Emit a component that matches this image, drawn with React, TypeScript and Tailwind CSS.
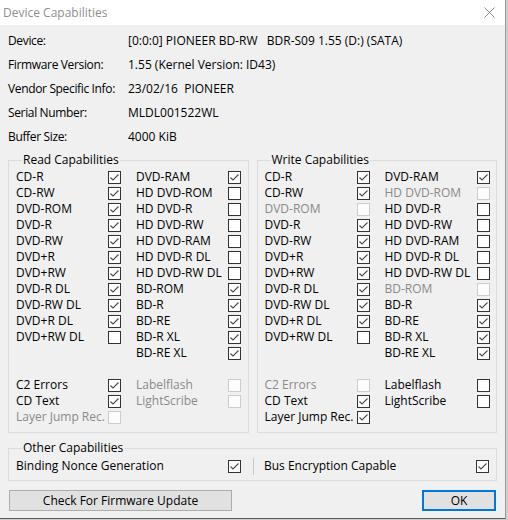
import React from "react";

type Item = { label: string; checked?: boolean; disabled?: boolean } | null;

const FONT = { fontFamily: '"Open Sans", "Noto Sans", sans-serif' };

function Check({ checked, disabled }: { checked?: boolean; disabled?: boolean }) {
  return (
    <span
      className={
        "flex h-[13px] w-[13px] shrink-0 items-center justify-center border " +
        (disabled ? "border-[#cccccc] bg-[#fcfcfc]" : "border-[#333333] bg-white")
      }
    >
      {checked && (
        <svg width="11" height="11" viewBox="0 0 11 11">
          <path d="M1.5 5.5 L4 8 L9.5 2.5" fill="none" stroke="#4a4a4a" strokeWidth="1.1" />
        </svg>
      )}
    </span>
  );
}

function Row({ item }: { item: Item }) {
  if (!item) return <div className="h-[16px]" />;
  return (
    <div className="flex h-[16px] items-center">
      <span
        className={
          "w-[92px] shrink-0 whitespace-nowrap text-[12px] leading-[16px] " +
          (item.disabled ? "text-[#8a8a8a]" : "text-black")
        }
      >
        {item.label}
      </span>
      <Check checked={item.checked} disabled={item.disabled} />
    </div>
  );
}

function Column({ items, wide }: { items: Item[]; wide?: boolean }) {
  return (
    <div className={"flex flex-col " + (wide ? "w-[120px]" : "w-[110px]")}>
      {items.map((it, i) => (
        <Row key={i} item={it} />
      ))}
    </div>
  );
}

function Group({ title, left, right }: { title: string; left: Item[]; right: Item[] }) {
  return (
    <fieldset className="w-[241px] min-w-0 border border-[#dcdcdc] pl-[7px] pt-[1px] pb-[7px]">
      <legend className="ml-[6px] px-[1px] text-[12px] leading-[16px] text-black">{title}</legend>
      <div className="flex">
        <Column items={left} wide />
        <Column items={right} />
      </div>
    </fieldset>
  );
}

const c = (label: string): Item => ({ label, checked: true });
const u = (label: string): Item => ({ label });
const d = (label: string): Item => ({ label, disabled: true });

const readLeft: Item[] = [
  c("CD-R"), c("CD-RW"), c("DVD-ROM"), c("DVD-R"), c("DVD-RW"), c("DVD+R"), c("DVD+RW"),
  c("DVD-R DL"), c("DVD-RW DL"), c("DVD+R DL"), u("DVD+RW DL"), null, null,
  c("C2 Errors"), c("CD Text"), d("Layer Jump Rec."),
];
const readRight: Item[] = [
  c("DVD-RAM"), u("HD DVD-ROM"), u("HD DVD-R"), u("HD DVD-RW"), u("HD DVD-RAM"), u("HD DVD-R DL"),
  u("HD DVD-RW DL"), c("BD-ROM"), c("BD-R"), c("BD-RE"), c("BD-R XL"), c("BD-RE XL"), null,
  d("Labelflash"), d("LightScribe"), null,
];
const writeLeft: Item[] = [
  c("CD-R"), c("CD-RW"), d("DVD-ROM"), c("DVD-R"), c("DVD-RW"), c("DVD+R"), c("DVD+RW"),
  c("DVD-R DL"), c("DVD-RW DL"), c("DVD+R DL"), u("DVD+RW DL"), null, null,
  d("C2 Errors"), c("CD Text"), c("Layer Jump Rec."),
];
const writeRight: Item[] = [
  c("DVD-RAM"), d("HD DVD-ROM"), u("HD DVD-R"), u("HD DVD-RW"), u("HD DVD-RAM"), u("HD DVD-R DL"),
  u("HD DVD-RW DL"), d("BD-ROM"), c("BD-R"), c("BD-RE"), c("BD-R XL"), c("BD-RE XL"), null,
  u("Labelflash"), u("LightScribe"), null,
];

const info: [string, string][] = [
  ["Device:", "[0:0:0] PIONEER BD-RW   BDR-S09 1.55 (D:) (SATA)"],
  ["Firmware Version:", "1.55 (Kernel Version: ID43)"],
  ["Vendor Specific Info:", "23/02/16  PIONEER"],
  ["Serial Number:", "MLDL001522WL"],
  ["Buffer Size:", "4000 KiB"],
];

export default function App() {
  return (
    <div className="h-[520px] w-[508px] overflow-hidden bg-[#cfcfcf]" style={FONT}>
      <div className="flex h-[519px] w-[506px] flex-col border-r border-b border-r-[#9a9a9a] border-b-[#5a5a5a] bg-[#f0f0f0]">
        {/* title bar */}
        <div className="flex h-[25px] shrink-0 items-center justify-between bg-white pl-[3px] pr-[10px]">
          <span className="text-[12px] text-[#8f8f8f]">Device Capabilities</span>
          <svg width="11" height="11" viewBox="0 0 11 11">
            <path d="M0.5 0.5 L10.5 10.5 M10.5 0.5 L0.5 10.5" stroke="#8a8a8a" strokeWidth="1" />
          </svg>
        </div>

        <div className="flex flex-col px-[8px] pt-[4px]">
          {info.map(([k, v]) => (
            <div key={k} className="flex h-[24px] items-center text-[12px] text-black">
              <span className="w-[120px] shrink-0 whitespace-nowrap tracking-[-0.35px]">{k}</span>
              <span className="whitespace-pre">{v}</span>
            </div>
          ))}

          <div className="mt-[3px] flex gap-[8px]">
            <Group title="Read Capabilities" left={readLeft} right={readRight} />
            <Group title="Write Capabilities" left={writeLeft} right={writeRight} />
          </div>

          <fieldset className="mt-[7px] w-[489px] min-w-0 border border-[#dcdcdc] pl-[7px] pt-[2px] pb-[6px]">
            <legend className="ml-[6px] px-[1px] text-[12px] leading-[16px] text-black">Other Capabilities</legend>
            <div className="flex h-[16px] items-center text-[12px]">
              <span className="w-[212px] shrink-0 whitespace-nowrap">Binding Nonce Generation</span>
              <Check checked />
              <span className="ml-[12px] h-[17px] w-px bg-[#c8c8c8]" />
              <span className="ml-[10px] w-[212px] shrink-0 whitespace-nowrap">Bus Encryption Capable</span>
              <Check checked />
            </div>
          </fieldset>

          <div className="mt-[9px] flex items-center justify-between pl-[1px] pr-[1px]">
            <button className="flex h-[21px] w-[223px] items-center justify-center border border-[#adadad] bg-[#e1e1e1] text-[12px] text-black">
              Check For Firmware Update
            </button>
            <button className="flex h-[21px] w-[74px] items-center justify-center border-2 border-[#0078d7] bg-[#e1e1e1] text-[12px] text-black">
              OK
            </button>
          </div>
        </div>
      </div>
    </div>
  );
}
